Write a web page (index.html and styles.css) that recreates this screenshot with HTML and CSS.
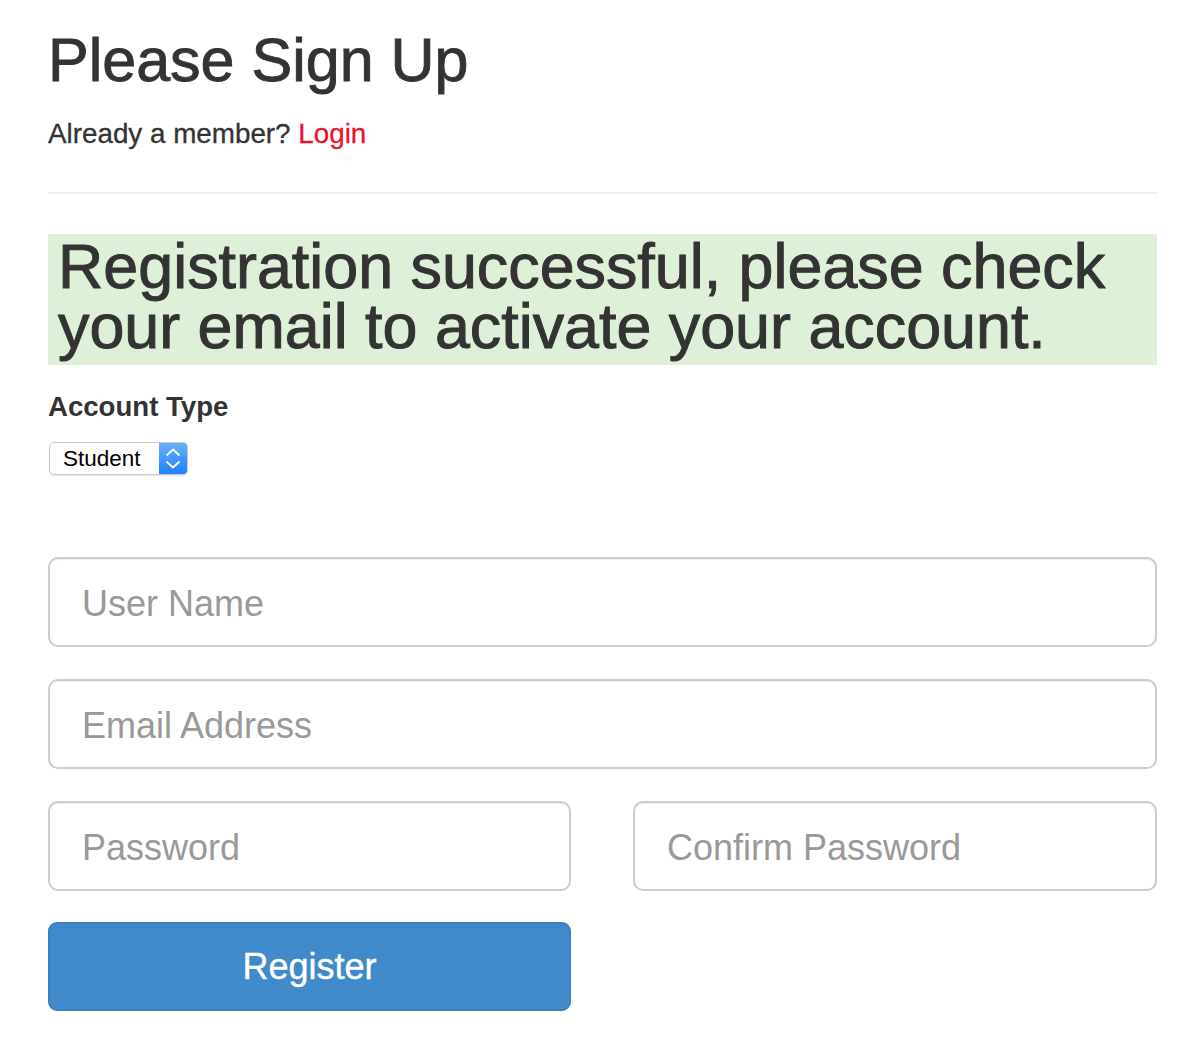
FILE: index.html
```html
<!DOCTYPE html>
<html>
<head>
<meta charset="utf-8">
<link rel="stylesheet" href="styles.css">
</head>
<body>
<div class="container">
  <h1 class="title">Please Sign Up</h1>
  <p class="lead">Already a member? <a class="login" href="#">Login</a></p>
  <hr class="rule">
  <div class="alert">Registration successful, please check your email to activate your account.</div>
  <div class="label">Account Type</div>
  <div class="select">
    <span class="select-text">Student</span>
    <span class="select-arrow">
      <svg width="28" height="33" viewBox="0 0 28 33">
        <path d="M8 13 L14 7.5 L20 13" fill="none" stroke="#fff" stroke-width="1.8" stroke-linecap="round" stroke-linejoin="round"/>
        <path d="M8 20 L14 25.5 L20 20" fill="none" stroke="#fff" stroke-width="1.8" stroke-linecap="round" stroke-linejoin="round"/>
      </svg>
    </span>
  </div>
  <form class="form">
    <input class="field" type="text" placeholder="User Name">
    <input class="field" type="email" placeholder="Email Address">
    <div class="row">
      <input class="field" type="password" placeholder="Password">
      <input class="field" type="password" placeholder="Confirm Password">
    </div>
    <div class="row">
      <button class="btn" type="button">Register</button>
      <div></div>
    </div>
  </form>
</div>
</body>
</html>
```

FILE: styles.css
```css
html, body {
  margin: 0;
  padding: 0;
  background: #fff;
}
body {
  font-family: "Liberation Sans", Arial, Helvetica, sans-serif;
  color: #333;
}
.container {
  width: 1109px;
  padding: 25px 0 0 48px;
}
.title {
  margin: 0;
  font-size: 61px;
  font-weight: normal;
  line-height: 70px;
  color: #333;
  -webkit-text-stroke: 0.9px #333;
}
.lead {
  margin: 20px 0 0 0;
  font-size: 27.8px;
  line-height: 38px;
  color: #333;
  -webkit-text-stroke: 0.3px #333;
}
.login {
  color: #e8132c;
  text-decoration: none;
  -webkit-text-stroke: 0.3px #e8132c;
}
.rule {
  margin: 39px 0 0 0;
  border: 0;
  border-top: 2px solid #eee;
  height: 0;
}
.alert {
  margin-top: 40px;
  background: #dff0d8;
  padding: 2px 10px 9px 10px;
  font-size: 62.8px;
  line-height: 60px;
  color: #333;
  -webkit-text-stroke: 1px #333;
}
.label {
  margin-top: 23px;
  font-size: 27.6px;
  font-weight: bold;
  line-height: 38px;
}
.select {
  margin-top: 16px;
  margin-left: 1px;
  width: 139px;
  height: 33px;
  box-sizing: border-box;
  border: 1px solid #c9c9c9;
  border-radius: 5px;
  background: #fff;
  display: flex;
  align-items: center;
  justify-content: space-between;
  overflow: hidden;
  box-shadow: 0 1px 1px rgba(0,0,0,0.1);
}
.select-text {
  padding-left: 13px;
  font-size: 22.5px;
  color: #000;
}
.select-arrow {
  width: 28px;
  height: 33px;
  display: flex;
  align-items: center;
  justify-content: center;
  background: linear-gradient(#6cb0f9, #1a80fb);
}
.form {
  margin-top: 82px;
  display: flex;
  flex-direction: column;
  gap: 32px;
}
.field {
  display: block;
  box-sizing: border-box;
  width: 100%;
  height: 90px;
  margin: 0;
  padding: 4px 32px 0 32px;
  border: 2px solid #ccc;
  border-radius: 10px;
  font-family: "Liberation Sans", Arial, sans-serif;
  font-size: 36px;
  color: #555;
  background: #fff;
  outline: none;
  box-shadow: inset 0 1px 1px rgba(0,0,0,0.075);
}
.field::placeholder {
  color: #999;
}
.row {
  display: grid;
  grid-template-columns: 523px 524px;
  column-gap: 62px;
}
.form .row + .row {
  margin-top: -1px;
}
.btn {
  height: 89px;
  box-sizing: border-box;
  border: 2px solid #3a7fc0;
  border-radius: 9px;
  background: #418aca;
  color: #fff;
  font-family: "Liberation Sans", Arial, sans-serif;
  font-size: 36px;
  -webkit-text-stroke: 0.4px #fff;
  cursor: pointer;
}
```
